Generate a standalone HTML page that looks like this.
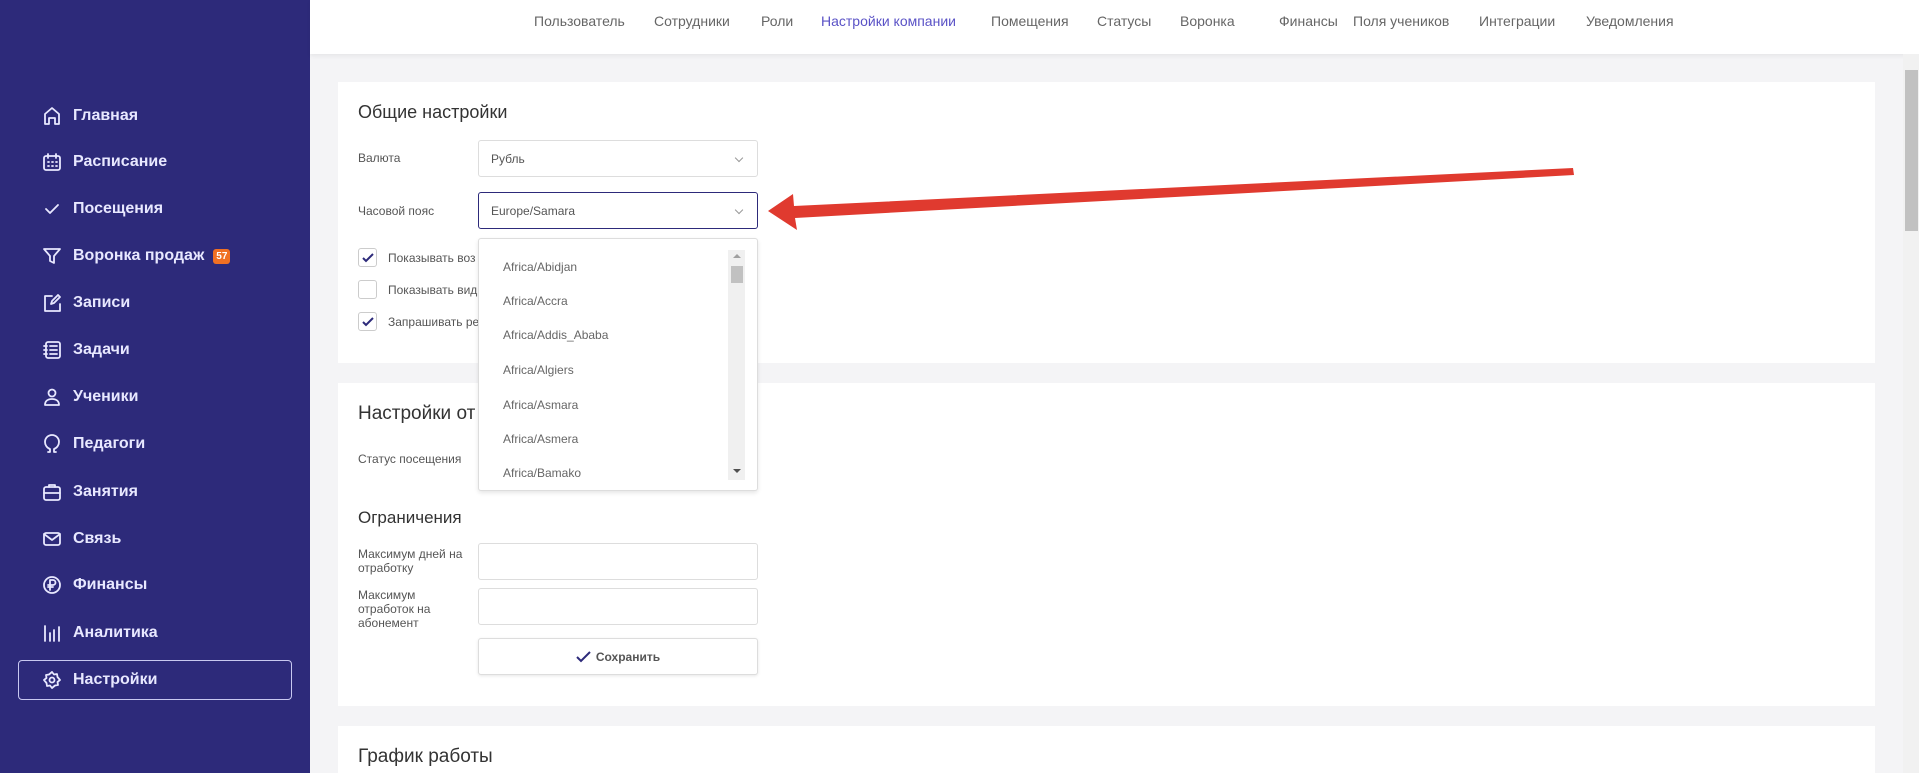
<!DOCTYPE html>
<html style="overflow:hidden;width:1919px;height:773px"><head><meta charset="utf-8"><style>
*{box-sizing:border-box;margin:0;padding:0}
body{width:1919px;height:773px;overflow:hidden;background:#f4f4f6;font-family:"Liberation Sans","DejaVu Sans",sans-serif;position:relative}
.sb{position:absolute;left:0;top:0;width:310px;height:773px;background:#2d2a7a}
.it{position:absolute;left:42px;height:24px;display:flex;align-items:center;color:#e8e8ff;font-size:16px;font-weight:bold}
.it svg{width:20px;height:20px;margin-right:11px;fill:none;stroke:#e8e8ff;stroke-width:1.8;stroke-linecap:round;stroke-linejoin:round}
.badge{background:#f07023;color:#fff;font-size:10px;border-radius:3px;padding:2px 3px;margin-left:9px}
.top{position:absolute;left:310px;top:0;width:1609px;height:54px;background:#fff;box-shadow:0 2px 4px rgba(0,0,0,.06)}
.nav{position:absolute;top:13px;font-size:14px;color:#666}
.card{position:absolute;left:338px;width:1537px;background:#fff}
.abs{position:absolute}
.h{font-size:18px;color:#333}
.lb{font-size:12px;color:#555}
.sel{position:absolute;left:478px;width:280px;height:37px;border:1px solid #ddd;border-radius:3px;background:#fff;font-size:12px;color:#555;padding:11px 12px}
.sel:after{content:"";position:absolute;right:15px;top:14px;width:5px;height:5px;border-right:1px solid #999;border-bottom:1px solid #999;transform:rotate(45deg)}
.cb{position:absolute;left:358px;width:19px;height:19px;border:1px solid #ccc;border-radius:3px;background:#fff}
.cb svg{position:absolute;left:3px;top:3px}
.dd{position:absolute;left:478px;top:238px;width:280px;height:253px;background:#fff;border:1px solid #ddd;border-radius:3px;box-shadow:0 2px 4px rgba(0,0,0,.1);overflow:hidden}
.dd div.o{position:absolute;left:24px;font-size:12px;color:#666}
.inp{position:absolute;left:478px;width:280px;height:37px;border:1px solid #ddd;border-radius:3px;background:#fff}
</style></head><body>
<div class="sb">
<div class="it" style="top:104px"><svg viewBox="0 0 20 20"><path d="M3 18V8l7-6 7 6v10h-4v-6H7v6z"/></svg>Главная</div>
<div class="it" style="top:150px"><svg viewBox="0 0 20 20"><rect x="2" y="4" width="16" height="14" rx="2"/><path d="M6 2v4M14 2v4M6 10h1M10 10h1M14 10h1M6 14h1M10 14h1M14 14h1"/></svg>Расписание</div>
<div class="it" style="top:197px"><svg viewBox="0 0 20 20"><path d="M4 10l4 4 8-8"/></svg>Посещения</div>
<div class="it" style="top:244px"><svg viewBox="0 0 20 20"><path d="M2 3h16l-6 7v7l-4-2v-5z"/></svg>Воронка продаж<span class="badge">57</span></div>
<div class="it" style="top:291px"><svg viewBox="0 0 20 20"><path d="M10 3H3v15h15v-7"/><path d="M9 11l1-3 6-6 2 2-6 6z"/></svg>Записи</div>
<div class="it" style="top:338px"><svg viewBox="0 0 20 20"><rect x="4" y="2" width="14" height="16" rx="2"/><path d="M2 6h3M2 10h3M2 14h3M8 6h7M8 10h7M8 14h7"/></svg>Задачи</div>
<div class="it" style="top:385px"><svg viewBox="0 0 20 20"><circle cx="10" cy="6" r="3.5"/><path d="M3 18c0-4 3-6 7-6s7 2 7 6z"/></svg>Ученики</div>
<div class="it" style="top:432px"><svg viewBox="0 0 20 20"><path d="M6 18h2v-3c-3-1-5-4-5-7a7 7 0 0 1 14 0c0 3-2 6-5 7v3h2"/></svg>Педагоги</div>
<div class="it" style="top:480px"><svg viewBox="0 0 20 20"><rect x="2" y="5" width="16" height="13" rx="2"/><path d="M7 5V3h6v2M2 11h16"/></svg>Занятия</div>
<div class="it" style="top:527px"><svg viewBox="0 0 20 20"><rect x="2" y="4" width="16" height="12" rx="2"/><path d="M2 5l8 6 8-6"/></svg>Связь</div>
<div class="it" style="top:573px"><svg viewBox="0 0 20 20"><circle cx="10" cy="10" r="8"/><path d="M8 15V5h3a2.5 2.5 0 0 1 0 5H6M6 12h5"/></svg>Финансы</div>
<div class="it" style="top:621px"><svg viewBox="0 0 20 20"><path d="M3 3v15M8 10v8M12 7v11M17 4v14"/></svg>Аналитика</div>
<div class="abs" style="left:18px;top:660px;width:274px;height:40px;border:1px solid #c8c8f0;border-radius:4px"></div>
<div class="it" style="top:668px"><svg viewBox="0 0 20 20"><path d="M10 2l2 2.5 3-.5.5 3L18 10l-2.5 2 .5 3-3 .5L10 18l-2-2.5-3 .5-.5-3L2 10l2.5-2L4 5l3-.5z"/><circle cx="10" cy="10" r="2.5"/></svg>Настройки</div>
</div>
<div class="top">
<span class="nav" style="left:224px">Пользователь</span>
<span class="nav" style="left:344px">Сотрудники</span>
<span class="nav" style="left:451px">Роли</span>
<span class="nav" style="left:511px;color:#5a52c6">Настройки компании</span>
<span class="nav" style="left:681px">Помещения</span>
<span class="nav" style="left:787px">Статусы</span>
<span class="nav" style="left:870px">Воронка</span>
<span class="nav" style="left:969px">Финансы</span>
<span class="nav" style="left:1043px">Поля учеников</span>
<span class="nav" style="left:1169px">Интеграции</span>
<span class="nav" style="left:1276px">Уведомления</span>
</div>
<div class="card" style="top:82px;height:281px"></div>
<div class="card" style="top:383px;height:323px"></div>
<div class="card" style="top:726px;height:47px"></div>

<div class="abs h" style="left:358px;top:102px">Общие настройки</div>
<div class="abs lb" style="left:358px;top:151px">Валюта</div>
<div class="sel" style="top:140px">Рубль</div>
<div class="abs lb" style="left:358px;top:204px">Часовой пояс</div>
<div class="sel" style="top:192px;border-color:#2d2a7a">Europe/Samara</div>
<div class="cb" style="top:248px"><svg width="12" height="12" viewBox="0 0 12 12"><path d="M1 6l3 3 7-7" stroke="#2d2a7a" stroke-width="2" fill="none"/></svg></div>
<div class="abs lb" style="left:388px;top:251px">Показывать воз</div>
<div class="cb" style="top:280px"></div>
<div class="abs lb" style="left:388px;top:283px">Показывать вид</div>
<div class="cb" style="top:312px"><svg width="12" height="12" viewBox="0 0 12 12"><path d="M1 6l3 3 7-7" stroke="#2d2a7a" stroke-width="2" fill="none"/></svg></div>
<div class="abs lb" style="left:388px;top:315px">Запрашивать ре</div>

<div class="abs h" style="left:358px;top:403px;font-size:19px">Настройки от</div>
<div class="abs lb" style="left:358px;top:452px">Статус посещения</div>
<div class="abs h" style="left:358px;top:508px;font-size:17px">Ограничения</div>
<div class="abs lb" style="left:358px;top:547px;line-height:14px">Максимум дней на<br>отработку</div>
<div class="inp" style="top:543px"></div>
<div class="abs lb" style="left:358px;top:588px;line-height:14px">Максимум<br>отработок на<br>абонемент</div>
<div class="inp" style="top:588px"></div>
<div class="inp" style="top:638px;box-shadow:0 1px 3px rgba(0,0,0,.1);text-align:center;font-size:12px;font-weight:bold;color:#555;padding-top:11px"><svg width="16" height="12" viewBox="0 0 16 12" style="vertical-align:-2px;margin-right:4px"><path d="M1 6l4 4 9-9" stroke="#2d2a7a" stroke-width="2" fill="none"/></svg>Сохранить</div>
<div class="abs h" style="left:358px;top:746px;font-size:19px">График работы</div>

<div class="dd">
<div class="o" style="top:21px">Africa/Abidjan</div>
<div class="o" style="top:55px">Africa/Accra</div>
<div class="o" style="top:89px">Africa/Addis_Ababa</div>
<div class="o" style="top:124px">Africa/Algiers</div>
<div class="o" style="top:159px">Africa/Asmara</div>
<div class="o" style="top:193px">Africa/Asmera</div>
<div class="o" style="top:227px">Africa/Bamako</div>
<div class="abs" style="left:249px;top:11px;width:17px;height:230px;background:#f0f0f0"></div>
<div class="abs" style="left:252px;top:27px;width:12px;height:17px;background:#c1c1c1"></div>
<div class="abs" style="left:254px;top:15px;border:4px solid transparent;border-bottom:4px solid #a0a0a0;border-top:0"></div>
<div class="abs" style="left:254px;top:230px;border:4px solid transparent;border-top:4px solid #505050;border-bottom:0"></div>
</div>

<svg class="abs" style="left:0;top:0" width="1919" height="773"><path d="M1573 168 L1574 175 L795 218 L797 230 L768 211 L793 194 L794 206 Z" fill="#e03a2f"/></svg>

<div class="abs" style="left:1903px;top:54px;width:16px;height:719px;background:#f1f1f1"></div>
<div class="abs" style="left:1905px;top:70px;width:13px;height:161px;background:#c1c1c1"></div>
</body></html>
